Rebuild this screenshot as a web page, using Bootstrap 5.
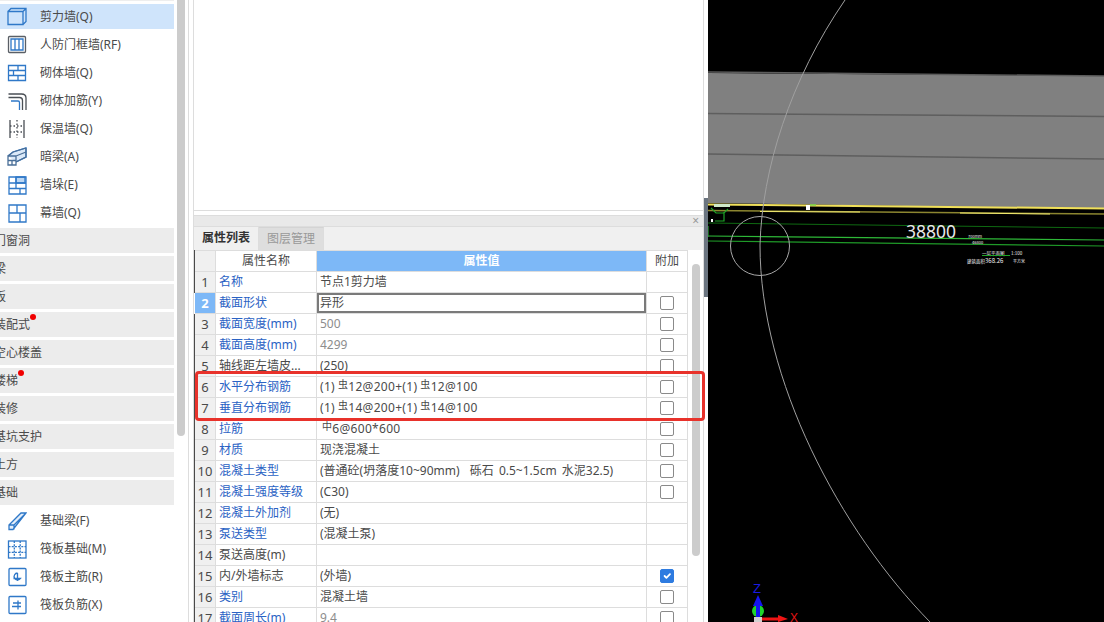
<!DOCTYPE html>
<html lang="zh-CN">
<head>
  <meta charset="UTF-8">
  <title>属性列表</title>
  <link href="https://cdn.jsdelivr.net/npm/bootstrap@5.3.0/dist/css/bootstrap.min.css" rel="stylesheet">
  <style>
    html, body { height: 622px; overflow: hidden; }
    body { font-family: "Noto Sans", "Noto Sans CJK SC", sans-serif; font-size: 12px; color: #4a4a4a; background: #fff; }
    .side-wrap { width: 189px; height: 622px; border-right: 1px solid #ddd; flex: none; }
    .side-list { width: 174px; padding-top: 3px; border-top: 1px solid #eee; gap: 3px; height: 622px; overflow: hidden; flex: none; }
    .tool-row { height: 25px; flex: none; gap: 13px; padding-left: 7px; }
    .tool-row.is-on { background: #cfe4fb; }
    .tool-row svg { width: 20px; height: 20px; flex: none; fill: none; stroke: #2f78c8; stroke-width: 1.3; }
    .group-row { height: 25px; flex: none; background: #ececec; text-indent: -6px; overflow: hidden; }
    .group-label { position: relative; }
    .red-dot { position: absolute; top: -2px; right: -6px; width: 6px; height: 6px; border-radius: 50%; background: #f00000; }
    .side-track { width: 8px; height: 436px; margin-left: 3px; background: #ccc; border-radius: 0 0 4px 4px; flex: none; }
    .prop-pane { width: 511px; height: 622px; margin-left: 4px; border-left: 1px solid #ddd; border-right: 1px solid #ddd; flex: none; overflow: hidden; }
    .top-blank { height: 211px; border-bottom: 1px solid #ddd; flex: none; }
    .pane-head { height: 12px; margin-top: 4px; background: #e9e9e9; border-top: 1px solid #ddd; border-bottom: 1px solid #ddd; flex: none; justify-content: flex-end; padding-right: 4px; color: #999; font-size: 12px; line-height: 9px; }
    .tab-strip { height: 23px; background: #f0f0f0; flex: none; }
    .tab-item { width: 65px; line-height: 22px; text-align: center; border-right: 1px solid #ddd; color: #333; font-weight: 700; }
    .tab-item.is-off { background: #dedede; color: #999; font-weight: 400; border-top: 1px solid #d4d4d4; }
    .grid-wrap { width: 509px; flex: none; }
    .table.prop-grid { table-layout: fixed; width: 493px; margin: 0; --bs-border-color: #ddd; --bs-table-color: #4a4a4a; font-size: 12px; border-left: 0; flex: none; }
    .table.prop-grid > * > * > * { padding: 0 3px; height: 21px; line-height: 20px; white-space: nowrap; overflow: hidden; vertical-align: middle; }
    .w-no { width: 21px; }
    .w-name { width: 101px; }
    .w-val { width: 330px; }
    .w-add { width: 41px; }
    .table.prop-grid > * > * > .col-no { background: #f0f0f0; text-align: center; font-size: 13px; padding: 0; }
    .table.prop-grid > * > * > .col-no.is-on { background: #7db8f7; color: #fff; font-weight: 700; }
    .table.prop-grid > * > * > .name-link { color: #2a62c4; }
    .table.prop-grid > * > * > .val-mute { color: #8d8d8d; }
    .table.prop-grid > * > * > .head-val { background: #7db8f7; color: #fff; font-weight: 700; text-align: center; }
    .table.prop-grid > * > * > .cell-edit { box-shadow: inset 0 0 0 2px #7a7a7a; }
    .table.prop-grid > * > * > .cell-check { padding: 0; }
    .table.prop-grid > * > * > .wide-gap { word-spacing: 2px; }
    .table.prop-grid > * > * > .rebar-cell { letter-spacing: .3px; }
    .prop-grid .form-check-input { width: 14px; height: 14px; margin: 0 0 0 13px; border: 1px solid #8a8a8a; border-radius: 2px; float: none; display: block; }
    .prop-grid .form-check-input:checked { background-color: #2e7be0; border-color: #2e7be0; }
    .rebar { font-size: 10px; line-height: 1; position: relative; top: -3px; margin: 0 0 0 3px; }
    .rebar.rebar-tight { margin: 0 0 0 2px; }
    .grid-thumb { width: 8px; height: 292px; margin: 14px 0 0 4px; background: #ccc; border-radius: 4px; flex: none; }
    .split-bar { width: 4px; flex: none; height: 622px; }
    .split-grip { height: 99px; margin-top: 198px; background: #6b7580; }
    .view-3d { width: 396px; height: 622px; flex: none; background: #000; display: block; }
    .red-frame { position: absolute; left: 195px; top: 371px; width: 510px; height: 50px; border: 3px solid #e8322b; border-radius: 4px; pointer-events: none; }
  </style>
</head>
<body class="d-flex">
  <div class="side-wrap d-flex">
    <div class="side-list d-flex flex-column">
      <div class="tool-row is-on d-flex align-items-center">
        <svg viewBox="0 0 20 20"><path d="M1 4.500h15v13H1zM1 4.500L4 1.500h15v13l-3 3M16 4.500l3-3"/></svg><span>剪力墙(Q)</span>
      </div>
      <div class="tool-row d-flex align-items-center">
        <svg viewBox="0 0 20 20"><rect x="1.500" y="1.500" width="17" height="16" rx="1" stroke="#5a5f66"/><path d="M4 4h12v11H4zM8 4v11M12 4v11"/></svg><span>人防门框墙(RF)</span>
      </div>
      <div class="tool-row d-flex align-items-center">
        <svg viewBox="0 0 20 20"><path d="M1.500 2.500h17v15h-17zM1.500 7.500h17M1.500 12.500h17M11 2.500v5M6.500 7.500v5M11 12.500v5"/></svg><span>砌体墙(Q)</span>
      </div>
      <div class="tool-row d-flex align-items-center">
        <svg viewBox="0 0 20 20"><g stroke="#4a4f55"><path d="M1.500 3h13c3 0 4.500 2 4.500 4v12M1.500 6.500h11c2 0 3 1 3 3V19"/></g><path d="M4 10h7c1 0 1.500.5 1.500 1.500V19"/></svg><span>砌体加筋(Y)</span>
      </div>
      <div class="tool-row d-flex align-items-center">
        <svg viewBox="0 0 20 20"><g stroke="#4a4f55"><path d="M3 1v18M17 1v18"/><path d="M10 1v18M3 7h14M3 13h14" stroke-dasharray="1.500 2"/></g></svg><span>保温墙(Q)</span>
      </div>
      <div class="tool-row d-flex align-items-center">
        <svg viewBox="0 0 20 20"><path d="M1 9l5-4L19 1v9L9 15" fill="#dbe9f8"/><path d="M1 9l5-4L19 1M1 9v9h8V9zM9 9L19 5M19 1v9L9 15M1 13.500h8M5 13.500V18" stroke="#4a6f98"/></svg><span>暗梁(A)</span>
      </div>
      <div class="tool-row d-flex align-items-center">
        <svg viewBox="0 0 20 20"><path d="M9 2h9v6H9z" fill="#bcd7f3"/><path d="M2 2h7v6h10v11H2zM9 2h10v6M2 8h7M2 13.500h17M9 8v5.500M13 13.500V19"/></svg><span>墙垛(E)</span>
      </div>
      <div class="tool-row d-flex align-items-center">
        <svg viewBox="0 0 20 20"><path d="M2 2h17v17H2zM10 2v8M2 10h17M13 10v9"/></svg><span>幕墙(Q)</span>
      </div>
      <div class="group-row d-flex align-items-center"><span>门窗洞</span></div>
      <div class="group-row d-flex align-items-center"><span>梁</span></div>
      <div class="group-row d-flex align-items-center"><span>板</span></div>
      <div class="group-row d-flex align-items-center"><span class="group-label">装配式<i class="red-dot"></i></span></div>
      <div class="group-row d-flex align-items-center"><span>空心楼盖</span></div>
      <div class="group-row d-flex align-items-center"><span class="group-label">楼梯<i class="red-dot"></i></span></div>
      <div class="group-row d-flex align-items-center"><span>装修</span></div>
      <div class="group-row d-flex align-items-center"><span>基坑支护</span></div>
      <div class="group-row d-flex align-items-center"><span>土方</span></div>
      <div class="group-row d-flex align-items-center"><span>基础</span></div>
      <div class="tool-row d-flex align-items-center">
        <svg viewBox="0 0 20 20"><path d="M2 14L14 2h5L6 18.500H2zM2 14h5v4.500M7 14L19 2" fill="#e3eefa"/></svg><span>基础梁(F)</span>
      </div>
      <div class="tool-row d-flex align-items-center">
        <svg viewBox="0 0 20 20"><rect x="1.500" y="2" width="17.500" height="17"/><path d="M7.300 2v17M13.200 2v17M1.500 7.600h17.500M1.500 13.300h17.500" stroke-dasharray="2 1.200"/></svg><span>筏板基础(M)</span>
      </div>
      <div class="tool-row d-flex align-items-center">
        <svg viewBox="0 0 20 20"><rect x="2" y="1.500" width="17" height="17" rx="1"/><path d="M10.500 6a3.500 3.500 0 1 0 3 5.500h-7M10.500 6v8"/></svg><span>筏板主筋(R)</span>
      </div>
      <div class="tool-row d-flex align-items-center">
        <svg viewBox="0 0 20 20"><rect x="2" y="1.500" width="17" height="17" rx="1"/><path d="M6 8h8M5 11.500h9M11 5.500v9"/></svg><span>筏板负筋(X)</span>
      </div>
    </div>
    <div class="side-track"></div>
  </div>

  <div class="prop-pane d-flex flex-column">
    <div class="top-blank"></div>
    <div class="pane-head d-flex">×</div>
    <div class="tab-strip d-flex">
      <div class="tab-item">属性列表</div>
      <div class="tab-item is-off">图层管理</div>
    </div>
    <div class="grid-wrap d-flex">
      <table class="table table-bordered prop-grid">
        <colgroup><col class="w-no"><col class="w-name"><col class="w-val"><col class="w-add"></colgroup>
        <thead>
          <tr><th class="col-no"></th><th class="fw-normal text-center">属性名称</th><th class="head-val">属性值</th><th class="fw-normal text-center">附加</th></tr>
        </thead>
        <tbody>
          <tr><td class="col-no">1</td><td class="name-link">名称</td><td>节点1剪力墙</td><td></td></tr>
          <tr><td class="col-no is-on">2</td><td class="name-link">截面形状</td><td class="cell-edit">异形</td><td class="cell-check"><input class="form-check-input" type="checkbox"></td></tr>
          <tr><td class="col-no">3</td><td class="name-link">截面宽度(mm)</td><td class="val-mute">500</td><td class="cell-check"><input class="form-check-input" type="checkbox"></td></tr>
          <tr><td class="col-no">4</td><td class="name-link">截面高度(mm)</td><td class="val-mute">4299</td><td class="cell-check"><input class="form-check-input" type="checkbox"></td></tr>
          <tr><td class="col-no">5</td><td>轴线距左墙皮...</td><td>(250)</td><td class="cell-check"><input class="form-check-input" type="checkbox"></td></tr>
          <tr><td class="col-no">6</td><td class="name-link">水平分布钢筋</td><td class="rebar-cell">(1)<span class="rebar">虫</span>12@200+(1)<span class="rebar">虫</span>12@100</td><td class="cell-check"><input class="form-check-input" type="checkbox"></td></tr>
          <tr><td class="col-no">7</td><td class="name-link">垂直分布钢筋</td><td class="rebar-cell">(1)<span class="rebar">虫</span>14@200+(1)<span class="rebar">虫</span>14@100</td><td class="cell-check"><input class="form-check-input" type="checkbox"></td></tr>
          <tr><td class="col-no">8</td><td class="name-link">拉筋</td><td class="rebar-cell"><span class="rebar rebar-tight">中</span>6@600*600</td><td class="cell-check"><input class="form-check-input" type="checkbox"></td></tr>
          <tr><td class="col-no">9</td><td class="name-link">材质</td><td>现浇混凝土</td><td class="cell-check"><input class="form-check-input" type="checkbox"></td></tr>
          <tr><td class="col-no">10</td><td class="name-link">混凝土类型</td><td class="wide-gap">(普通砼(坍落度10~90mm)&nbsp; 砾石 0.5~1.5cm 水泥32.5)</td><td class="cell-check"><input class="form-check-input" type="checkbox"></td></tr>
          <tr><td class="col-no">11</td><td class="name-link">混凝土强度等级</td><td>(C30)</td><td class="cell-check"><input class="form-check-input" type="checkbox"></td></tr>
          <tr><td class="col-no">12</td><td class="name-link">混凝土外加剂</td><td>(无)</td><td></td></tr>
          <tr><td class="col-no">13</td><td class="name-link">泵送类型</td><td>(混凝土泵)</td><td></td></tr>
          <tr><td class="col-no">14</td><td>泵送高度(m)</td><td></td><td></td></tr>
          <tr><td class="col-no">15</td><td>内/外墙标志</td><td>(外墙)</td><td class="cell-check"><input class="form-check-input" type="checkbox" checked></td></tr>
          <tr><td class="col-no">16</td><td class="name-link">类别</td><td>混凝土墙</td><td class="cell-check"><input class="form-check-input" type="checkbox"></td></tr>
          <tr><td class="col-no">17</td><td class="name-link">截面周长(m)</td><td class="val-mute">9.4</td><td class="cell-check"><input class="form-check-input" type="checkbox"></td></tr>
        </tbody>
      </table>
      <div class="grid-thumb"></div>
    </div>
  </div>

  <div class="split-bar"><div class="split-grip"></div></div>

  <svg class="view-3d" viewBox="708 0 396 622">
    <polygon points="708,73 1104,76 1104,209 708,203" fill="#808080"/>
    <path d="M708 72L1104 76" stroke="#5c5c5c" stroke-width="1.500"/>
    <path d="M708 113.500L1104 116.500M708 154L1104 159" stroke="#5e5e5e" stroke-width="1.500"/>
    <path d="M708 204.500L1104 208.500" stroke="#f0e05a" stroke-width="2"/>
    <path d="M708 210.500L1104 214" stroke="#8c8630" stroke-width="1.500"/>
    <path d="M760 211.500L860 212M960 213L1050 214" stroke="#f2ea70" stroke-width="1"/>
    <path d="M708 223L1104 228" stroke="#0f6a12" stroke-width="1"/>
    <path d="M708 236L1104 240" stroke="#2eb838" stroke-width="1.200"/>
    <path d="M708 241L1104 246" stroke="#1f9a28" stroke-width="1.200"/>
    <path d="M708 226V237M711 208l5 5h8l4-4M724 212v9h-9" fill="none" stroke="#1fa328" stroke-width="1.200"/>
    <rect x="714" y="204" width="16" height="3" fill="#cfe9c9"/>
    <rect x="711" y="219" width="2" height="3" fill="#fff"/>
    <rect x="806" y="205" width="4" height="5" fill="#fff"/>
    <path d="M810 205h6" stroke="#7cd84a" stroke-width="1.500"/>
    <path d="M845 0C790 80 762 170 760 245C760 380 840 530 930 622" fill="none" stroke="#a0a0a0" stroke-width="1"/>
    <circle cx="760" cy="246" r="29.500" fill="none" stroke="#a8a8a8" stroke-width="1"/>
    <text x="906" y="238" font-family="Noto Sans" font-size="17.500" fill="#e8e8e8">38800</text>
    <g font-family="Noto Sans CJK SC" fill="#f2f2f2">
      <text x="968" y="238" font-size="4">700mm</text>
      <text x="972" y="244" font-size="4">46800</text>
      <text x="982" y="254.500" font-size="4.500">一层平面图</text>
      <text x="1011" y="254.500" font-size="4.500">1:100</text>
      <text x="967" y="263" font-size="4.500">建筑面积</text>
      <text x="985" y="263" font-size="6">368.26</text>
      <text x="1013" y="263" font-size="4">平方米</text>
    </g>
    <path d="M982 255.500h28" stroke="#1fa328"/>
    <text x="753" y="593" font-family="Liberation Sans" font-size="13" fill="#1a1ae0">Z</text>
    <ellipse cx="758" cy="611" rx="6" ry="6" fill="#1fd42a"/>
    <polygon points="758,595 753,606 763,606" fill="#1414f0"/>
    <rect x="756" y="605" width="4" height="12" fill="#1414f0"/>
    <rect x="754" y="617" width="8" height="5" fill="#d0d0d0"/>
    <path d="M762 619H779" stroke="#f01414" stroke-width="3"/>
    <polygon points="778,615 788,619 778,622" fill="#f01414"/>
    <text x="790" y="622" font-family="Liberation Sans" font-size="12" fill="#e01414">X</text>
  </svg>

  <div class="red-frame"></div>
</body>
</html>
